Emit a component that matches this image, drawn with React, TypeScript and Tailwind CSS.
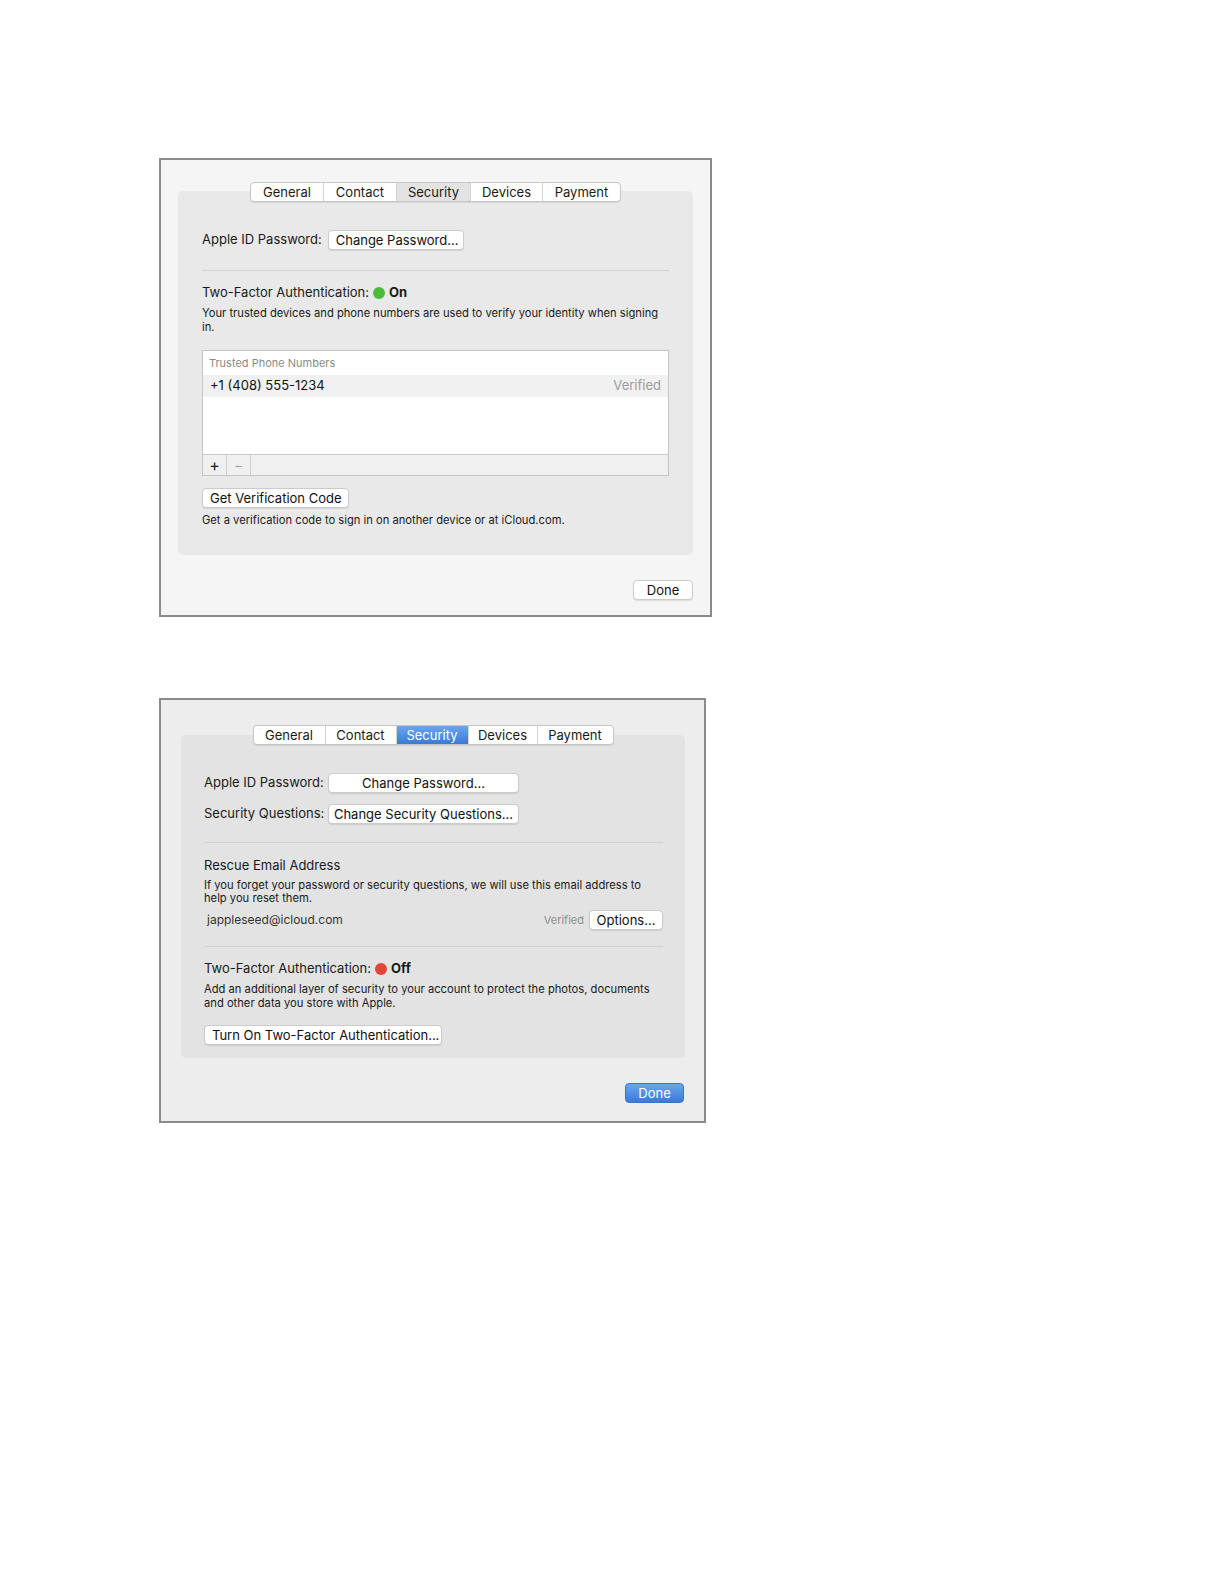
const TABS = ["General", "Contact", "Security", "Devices", "Payment"]

function TabBar({ widths, blue }: { widths: string[]; blue?: boolean }) {
  return (
    <div className="relative z-10 flex justify-center">
      <div className="flex h-[20px] overflow-hidden rounded-[4px] border border-[#c6c6c6] bg-white shadow-[0_1px_1px_rgba(0,0,0,0.08)]">
        {TABS.map((t, i) => {
          const active = t === "Security"
          let cls = "text-[#1a1a1a]"
          if (active) {
            cls = blue
              ? "bg-gradient-to-b from-[#6aa6ef] to-[#3a7ad6] text-white"
              : "bg-[#e3e3e3] text-[#1a1a1a]"
          }
          return (
            <div
              key={t}
              className={`flex items-center justify-center text-[13px] leading-none ${widths[i]} ${cls} ${
                i > 0 ? "border-l border-[#d2d2d2]" : ""
              }`}
            >
              {t}
            </div>
          )
        })}
      </div>
    </div>
  )
}

function Btn({ children, className = "" }: { children: React.ReactNode; className?: string }) {
  return (
    <div
      className={`flex h-[20px] items-center whitespace-nowrap rounded-[4px] border border-[#cbcbcb] bg-white px-[7px] text-[13px] leading-none text-[#111] shadow-[0_1px_1px_rgba(0,0,0,0.1)] ${className}`}
    >
      {children}
    </div>
  )
}

function WindowOn() {
  return (
    <div className="h-[459px] w-[553px] border-2 border-[#8b8b8b] bg-[#f5f5f5] px-[17px] pt-[22px]">
      <TabBar widths={["w-[72px]", "w-[73px]", "w-[74px]", "w-[72px]", "w-[78px]"]} />
      <div className="-mt-[11px] h-[364px] rounded-[5px] bg-[#e9e9e9] px-6 pt-[39px]">
        <div className="flex h-[20px] items-center gap-[6px]">
          <span className="text-[13px] text-[#1a1a1a]">Apple ID Password:</span>
          <Btn className="w-[136px]">Change Password...</Btn>
        </div>
        <div className="mt-[20px] h-px bg-[#d3d3d3]" />
        <div className="mt-[14px] flex h-[16px] items-center text-[13px] text-[#1a1a1a]">
          Two-Factor Authentication:
          <span className="ml-[4px] mr-[4px] inline-block h-[12px] w-[12px] rounded-full bg-[#4cbb40]" />
          <span className="font-bold">On</span>
        </div>
        <p className="mt-[5px] text-[11.2px] leading-[14px] text-[#1a1a1a]">
          Your trusted devices and phone numbers are used to verify your identity when signing in.
        </p>
        <div className="mt-[16px] flex h-[126px] flex-col border border-[#c4c4c4] bg-white">
          <div className="flex h-[24px] items-center pl-[6px] text-[11px] text-[#8a8a8a]">
            Trusted Phone Numbers
          </div>
          <div className="flex h-[22px] items-center justify-between bg-[#f1f1f1] pl-[7px] pr-[7px] text-[13px]">
            <span className="text-[#111]">+1 (408) 555-1234</span>
            <span className="text-[#9c9c9c]">Verified</span>
          </div>
          <div className="flex-1" />
          <div className="flex h-[21px] border-t border-[#c8c8c8] bg-[#f0f0f0]">
            <div className="flex w-[24px] items-center justify-center border-r border-[#cfcfcf] text-[16px] leading-none text-[#222]">
              +
            </div>
            <div className="flex w-[24px] items-center justify-center border-r border-[#cfcfcf] text-[13px] leading-none text-[#9a9a9a]">
              −
            </div>
          </div>
        </div>
        <Btn className="mt-[12px] w-[147px]">Get Verification Code</Btn>
        <p className="mt-[5px] text-[11.2px] leading-[14px] text-[#1a1a1a]">
          Get a verification code to sign in on another device or at iCloud.com.
        </p>
      </div>
      <div className="mt-[25px] flex justify-end">
        <Btn className="w-[60px] justify-center">Done</Btn>
      </div>
    </div>
  )
}

function WindowOff() {
  return (
    <div className="h-[425px] w-[547px] border-2 border-[#8b8b8b] bg-[#ededed] pl-5 pr-[19px] pt-[25px]">
      <TabBar blue widths={["w-[71px]", "w-[71px]", "w-[72px]", "w-[69px]", "w-[76px]"]} />
      <div className="-mt-[10px] h-[323px] rounded-[5px] bg-[#e3e3e3] pl-[23px] pr-[22px] pt-[38px]">
        <div className="grid grid-cols-[118px_191px] items-center gap-x-[6px] gap-y-[11px]">
          <span className="whitespace-nowrap text-right text-[13px] text-[#1a1a1a]">Apple ID Password:</span>
          <Btn className="justify-center">Change Password...</Btn>
          <span className="whitespace-nowrap text-right text-[13px] text-[#1a1a1a]">Security Questions:</span>
          <Btn className="justify-center">Change Security Questions...</Btn>
        </div>
        <div className="mt-[18px] h-px bg-[#d0d0d0]" />
        <div className="mt-[14px] h-[16px] text-[13px] leading-[16px] text-[#1a1a1a]">Rescue Email Address</div>
        <p className="mt-[6px] text-[11.2px] leading-[13px] text-[#1a1a1a]">
          If you forget your password or security questions, we will use this email address to help you reset them.
        </p>
        <div className="mt-[5px] flex h-[20px] items-center">
          <span className="pl-[3px] text-[12px] text-[#333]">jappleseed@icloud.com</span>
          <span className="ml-auto mr-[5px] text-[11px] text-[#8e8e8e]">Verified</span>
          <Btn className="w-[74px] justify-center">Options...</Btn>
        </div>
        <div className="mt-[16px] h-px bg-[#d0d0d0]" />
        <div className="mt-[14px] flex h-[16px] items-center text-[13px] text-[#1a1a1a]">
          Two-Factor Authentication:
          <span className="ml-[4px] mr-[4px] inline-block h-[12px] w-[12px] rounded-full bg-[#e2463a]" />
          <span className="font-bold">Off</span>
        </div>
        <p className="mt-[5px] text-[11.2px] leading-[14px] text-[#1a1a1a]">
          Add an additional layer of security to your account to protect the photos, documents and other data you store
          with Apple.
        </p>
        <Btn className="mt-[15px] w-[238px]">Turn On Two-Factor Authentication...</Btn>
      </div>
      <div className="mt-[25px] flex justify-end pr-px">
        <div className="flex h-[20px] w-[59px] items-center justify-center rounded-[4px] border border-[#3a74c8] bg-gradient-to-b from-[#6aa6ef] to-[#3a7ad6] text-[13px] leading-none text-white">
          Done
        </div>
      </div>
    </div>
  )
}

export default function App() {
  return (
    <div className="min-h-[1584px] bg-white pl-[159px] pt-[158px] [font-family:Inter,'Liberation_Sans',Arial,sans-serif]">
      <div className="flex flex-col items-start gap-[81px]">
        <WindowOn />
        <WindowOff />
      </div>
    </div>
  )
}
